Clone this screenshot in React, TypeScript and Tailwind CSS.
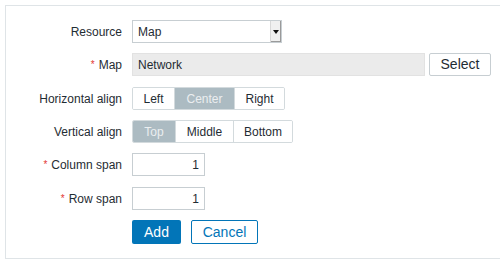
import React from 'react'

const font = { fontFamily: '"Liberation Sans", Arial, sans-serif' }

function Label({ text, required, className = '' }: { text: string; required?: boolean; className?: string }) {
  return (
    <div className={`flex items-center justify-end h-[23px] text-[12px] text-[#1f2c33] ${className}`}>
      {required && <span className="text-[#e33734] mr-[4px] text-[10px]">*</span>}
      {text}
    </div>
  )
}

function Segmented({ items, active, className = '' }: { items: { label: string; w: string }[]; active: number; className?: string }) {
  return (
    <div className={`flex h-[23px] border border-[#d3dadd] rounded-[2px] overflow-hidden w-fit ${className}`}>
      {items.map((it, i) => (
        <div
          key={it.label}
          className={`${it.w} flex items-center justify-center text-[12px] ${i > 0 ? 'border-l border-[#d3dadd]' : ''} ${
            i === active ? 'bg-[#acbbc2] text-[#ebeef0]' : 'bg-white text-[#1f2c33]'
          }`}
        >
          {it.label}
        </div>
      ))}
    </div>
  )
}

export default function App() {
  return (
    <div style={font} className="w-[500px] h-[264px] overflow-hidden bg-white pl-[5px] pt-[5px]">
      <div className="w-[520px] h-[254px] border border-[#dfe4e7] bg-white pt-[14px]">
        <div className="grid grid-cols-[116px_1fr] gap-x-[10px] gap-y-[10px]">
          <Label text="Resource" />
          <div className="w-[150px] h-[23px] border border-[#c7ced2] bg-white flex items-center text-[12px] text-[#1f2c33]">
            <span className="flex-1 pl-[5px]">Map</span>
            <div className="w-[11px] h-full bg-[#f0f0f0] border-l border-[#d8d8d8] flex items-center justify-center shadow-[inset_-1px_-1px_0_#9a9a9a]">
              <svg width="6" height="4" viewBox="0 0 6 4"><path d="M0 0h6L3 4z" fill="#111" /></svg>
            </div>
          </div>

          <Label text="Map" required />
          <div className="flex gap-[4px]">
            <div className="w-[293px] h-[23px] border border-[#e2e2e2] bg-[#ebebeb] flex items-center pl-[5px] text-[12px] text-[#1f2c33]">
              Network
            </div>
            <div className="w-[62px] h-[23px] border border-[#c7ced2] rounded-[2px] bg-white flex items-center justify-center text-[14px] text-[#1f2c33]">
              Select
            </div>
          </div>

          <Label text="Horizontal align" className="mt-[1px]" />
          <Segmented
            className="mt-[1px]"
            active={1}
            items={[
              { label: 'Left', w: 'w-[41px]' },
              { label: 'Center', w: 'w-[60px]' },
              { label: 'Right', w: 'w-[50px]' },
            ]}
          />

          <Label text="Vertical align" />
          <Segmented
            active={0}
            items={[
              { label: 'Top', w: 'w-[42px]' },
              { label: 'Middle', w: 'w-[58px]' },
              { label: 'Bottom', w: 'w-[59px]' },
            ]}
          />

          <Label text="Column span" required />
          <div className="w-[73px] h-[23px] border border-[#c7ced2] bg-white flex items-center justify-end pr-[5px] text-[12px] text-[#1f2c33]">
            1
          </div>

          <Label text="Row span" required className="mt-[1px]" />
          <div className="mt-[1px] w-[73px] h-[23px] border border-[#c7ced2] bg-white flex items-center justify-end pr-[5px] text-[12px] text-[#1f2c33]">
            1
          </div>

          <div />
          <div className="flex gap-[10px]">
            <div className="w-[49px] h-[24px] bg-[#0275b8] rounded-[2px] flex items-center justify-center text-[14px] text-white">
              Add
            </div>
            <div className="w-[67px] h-[24px] border border-[#0275b8] rounded-[2px] bg-white flex items-center justify-center text-[14px] text-[#0275b8]">
              Cancel
            </div>
          </div>
        </div>
      </div>
    </div>
  )
}
